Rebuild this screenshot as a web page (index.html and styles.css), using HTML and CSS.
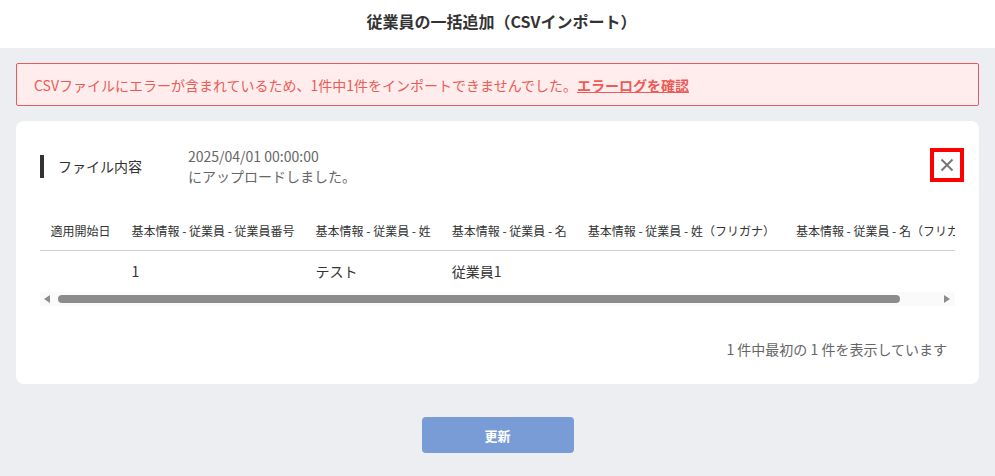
FILE: index.html
```html
<!DOCTYPE html>
<html lang="ja">

<head>
    <meta charset="UTF-8">
    <meta name="viewport" content="width=device-width, initial-scale=1.0">
    <title>従業員の一括追加（CSVインポート）</title>
    <link rel="stylesheet" href="styles.css">
</head>

<body>
    <header id="page-header">
        <h1>従業員の一括追加（CSVインポート）</h1>
    </header>

    <main id="content">
        <div class="alert">
            CSVファイルにエラーが含まれているため、1件中1件をインポートできませんでした。<a href="#" class="alert-link">エラーログを確認</a>
        </div>

        <section class="card">
            <div class="card-head">
                <h2 class="card-title">ファイル内容</h2>
                <p class="upload-info">2025/04/01 00:00:00<br>にアップロードしました。</p>
                <button class="close-btn" aria-label="閉じる">
                    <svg width="14" height="14" viewBox="0 0 14 14">
                        <path d="M1.5 1.5 L12.5 12.5 M12.5 1.5 L1.5 12.5" stroke="#777" stroke-width="2" fill="none" />
                    </svg>
                </button>
            </div>

            <div class="table-wrap">
                <table class="preview">
                    <thead>
                        <tr>
                            <th>適用開始日</th>
                            <th>基本情報 - 従業員 - 従業員番号</th>
                            <th>基本情報 - 従業員 - 姓</th>
                            <th>基本情報 - 従業員 - 名</th>
                            <th>基本情報 - 従業員 - 姓（フリガナ）</th>
                            <th>基本情報 - 従業員 - 名（フリガナ）</th>
                        </tr>
                    </thead>
                    <tbody>
                        <tr>
                            <td></td>
                            <td>1</td>
                            <td>テスト</td>
                            <td>従業員1</td>
                            <td></td>
                            <td></td>
                        </tr>
                    </tbody>
                </table>
            </div>
            <!-- horizontal scrollbar -->
            <div class="scrollbar">
                <span class="arrow arrow-left"></span>
                <span class="thumb"></span>
                <span class="arrow arrow-right"></span>
            </div>

            <p class="count">1 件中最初の 1 件を表示しています</p>
        </section>

        <div class="actions">
            <button class="btn-primary" disabled>更新</button>
        </div>
    </main>
</body>

</html>
```

FILE: styles.css
```css
* {
    margin: 0;
    padding: 0;
    box-sizing: border-box;
}

body {
    background-color: #edeef2;
    font-family: "Noto Sans CJK JP", "Noto Sans", sans-serif;
    color: #333;
}

/* -------- HEADER -------- */
#page-header {
    background-color: #fff;
    height: 48px;
    display: flex;
    align-items: center;
    justify-content: center;
}

#page-header h1 {
    font-size: 16px;
    font-weight: bold;
    color: #333;
    margin-top: -6px;
    padding-left: 8px;
}

#content {
    padding: 15px 16px 0;
}

/* -------- ALERT -------- */
.alert {
    border: 1px solid #e45c5c;
    background-color: #ffeded;
    color: #ec5b56;
    border-radius: 2px;
    font-size: 14px;
    height: 43px;
    display: flex;
    align-items: center;
    padding: 0 17px;
}

.alert-link {
    color: #ec5b56;
    font-weight: bold;
    text-decoration: underline;
}

/* -------- CARD -------- */
.card {
    background-color: #fff;
    border-radius: 8px;
    margin-top: 15px;
    padding: 20px 24px 25px;
}

.card-head {
    display: flex;
    align-items: center;
    height: 50px;
}

.card-title {
    font-size: 14px;
    font-weight: normal;
    color: #333;
    border-left: 4px solid #333;
    padding-left: 14px;
    line-height: 23px;
    width: 148px;
}

.upload-info {
    font-size: 14px;
    line-height: 20px;
    color: #666;
    flex: 1;
    margin-top: -1px;
}

.close-btn {
    width: 34px;
    height: 34px;
    border: 4px solid #f00;
    background: #fff;
    display: flex;
    align-items: center;
    justify-content: center;
    margin-right: -9px;
    margin-top: -2px;
    cursor: pointer;
}

/* -------- TABLE -------- */
.table-wrap {
    margin-top: 22px;
    overflow: hidden;
}

.preview {
    border-collapse: collapse;
    white-space: nowrap;
}

.preview th {
    font-size: 12px;
    font-weight: normal;
    color: #333;
    text-align: left;
    padding: 9px 10.5px 10px;
    line-height: 18px;
    border-bottom: 1px solid #ccc;
}

.preview td {
    font-size: 14px;
    color: #333;
    padding: 10px 10.5px 10px;
    line-height: 21px;
}

/* -------- SCROLLBAR -------- */
.scrollbar {
    height: 14px;
    background-color: #fafafa;
    display: flex;
    align-items: center;
    padding: 0 5px 0 4px;
}

.arrow {
    width: 0;
    height: 0;
    border-top: 4.5px solid transparent;
    border-bottom: 4.5px solid transparent;
}

.arrow-left {
    border-right: 6px solid #8c8c8c;
}

.arrow-right {
    border-left: 6px solid #8c8c8c;
    margin-left: auto;
}

.thumb {
    width: 842px;
    height: 8px;
    margin-left: 8px;
    border-radius: 4px;
    background-color: #8c8c8c;
}

.count {
    margin-top: 33px;
    text-align: right;
    font-size: 14px;
    line-height: 20px;
    color: #666;
    padding-right: 8px;
}

/* -------- BUTTON -------- */
.actions {
    display: flex;
    justify-content: center;
    margin-top: 33px;
}

.btn-primary {
    width: 152px;
    height: 36px;
    border: none;
    border-radius: 4px;
    background-color: #7a9cd6;
    color: #fff;
    font-family: inherit;
    font-size: 13px;
    font-weight: bold;
}
```
